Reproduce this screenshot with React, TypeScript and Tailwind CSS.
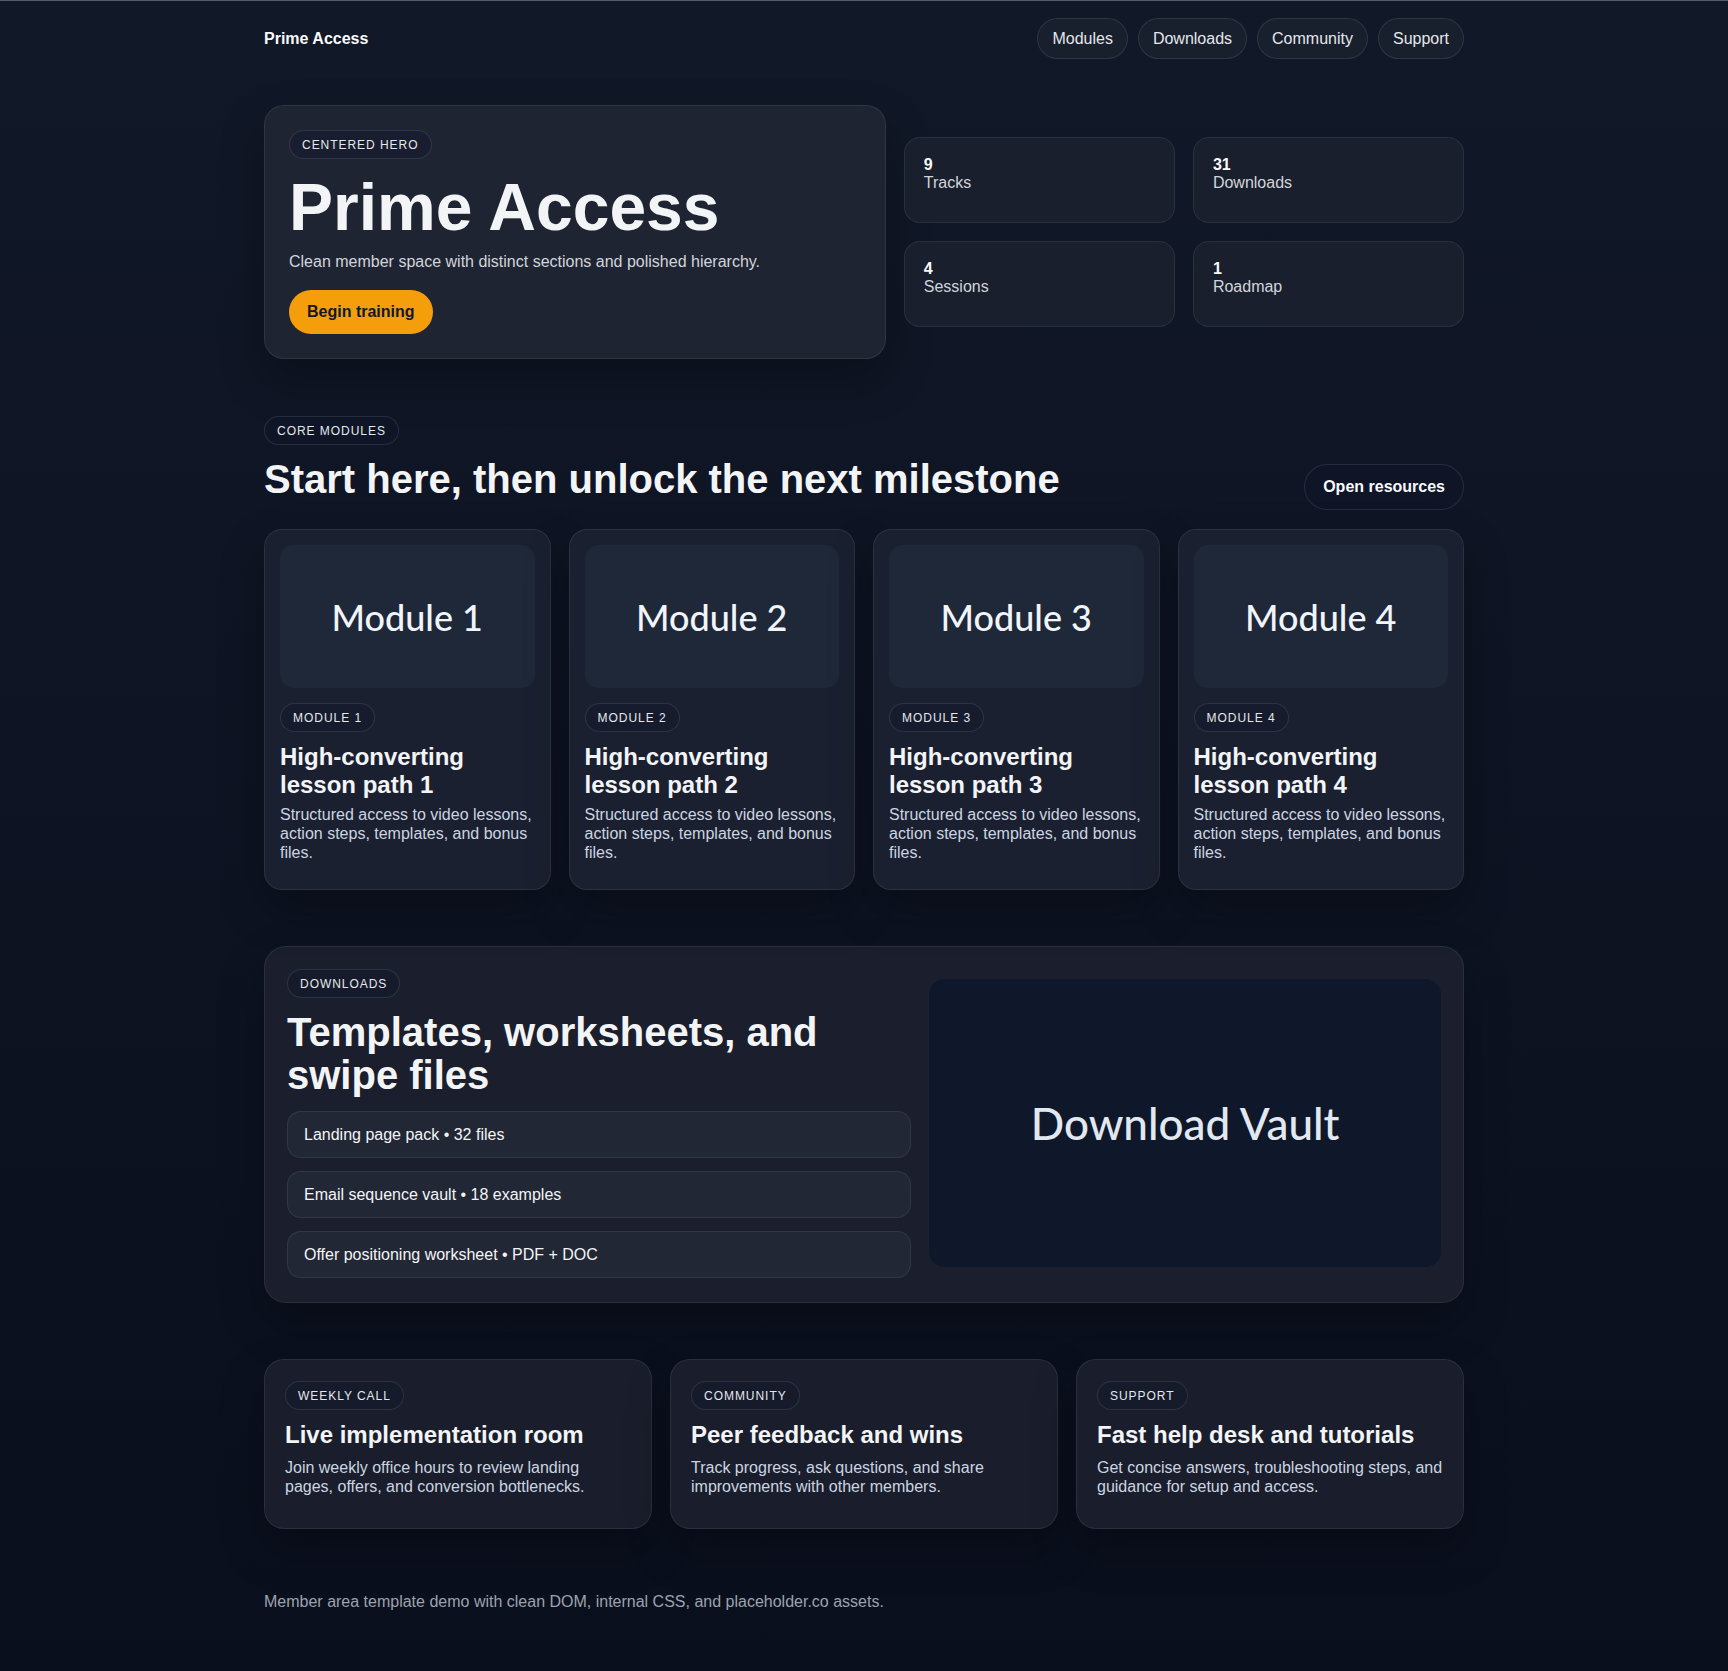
const tag =
  "inline-flex items-center rounded-full border border-white/10 bg-[#0f172a]/40 px-3 pt-[7px] pb-[5px] text-[12px] leading-[15px] tracking-[0.08em] uppercase text-[#e5e7eb]";

const navLinks = ["Modules", "Downloads", "Community", "Support"];

const stats = [
  { value: "9", label: "Tracks" },
  { value: "31", label: "Downloads" },
  { value: "4", label: "Sessions" },
  { value: "1", label: "Roadmap" },
];

const modules = [1, 2, 3, 4];

const files = [
  "Landing page pack • 32 files",
  "Email sequence vault • 18 examples",
  "Offer positioning worksheet • PDF + DOC",
];

const extras = [
  {
    tag: "Weekly call",
    title: "Live implementation room",
    text: "Join weekly office hours to review landing pages, offers, and conversion bottlenecks.",
  },
  {
    tag: "Community",
    title: "Peer feedback and wins",
    text: "Track progress, ask questions, and share improvements with other members.",
  },
  {
    tag: "Support",
    title: "Fast help desk and tutorials",
    text: "Get concise answers, troubleshooting steps, and guidance for setup and access.",
  },
];

export default function App() {
  return (
    <div className="min-h-screen border-t border-[#545b69] bg-linear-to-b from-[#111827] to-[#0a0f1d] font-['Liberation_Sans',Arial,sans-serif] text-[#f3f4f6]">
      <div className="mx-auto w-[1200px]">
        {/* Header */}
        <header className="flex items-center justify-between py-[17px]">
          <span className="text-[16px] font-bold text-[#f9fafb]">Prime Access</span>
          <nav className="flex items-center gap-[10px]">
            {navLinks.map((l) => (
              <a
                key={l}
                className="rounded-full border border-white/10 bg-white/[0.03] px-[14px] py-[10px] text-[16px] leading-[19px] text-[#e5e7eb]"
              >
                {l}
              </a>
            ))}
          </nav>
        </header>

        {/* Hero */}
        <section className="mt-[29px] grid grid-cols-[1.11fr_1fr] items-center gap-[18px]">
          <div className="flex flex-col items-start rounded-[20px] border border-white/[0.08] bg-[#1f2432] p-6 shadow-[0_20px_45px_rgba(0,0,0,0.28)]">
            <span className={tag}>Centered hero</span>
            <h1 className="mt-[15px] text-[66px] font-bold leading-none text-[#f3f4f6]">Prime Access</h1>
            <p className="mt-[10px] text-[16px] leading-6 text-[#d1d5db]">
              Clean member space with distinct sections and polished hierarchy.
            </p>
            <button className="mt-4 rounded-full bg-[#f59e0b] px-[18px] py-3 text-[16px] font-bold leading-5 text-[#111827]">
              Begin training
            </button>
          </div>
          <div className="grid grid-cols-2 gap-[18px]">
            {stats.map((s) => (
              <div
                key={s.label}
                className="h-[86px] rounded-2xl border border-white/[0.08] bg-[#1a1f2d] px-[19px] pt-[18px]"
              >
                <strong className="block text-[16px] font-bold leading-[18.4px] text-[#f9fafb]">{s.value}</strong>
                <span className="block text-[16px] leading-[18.4px] text-[#d1d5db]">{s.label}</span>
              </div>
            ))}
          </div>
        </section>

        {/* Core modules */}
        <section className="mt-[57px]">
          <div className="flex items-end justify-between">
            <div className="flex flex-col items-start">
              <span className={tag}>Core modules</span>
              <h2 className="mt-3 mb-[9px] text-[40px] font-bold leading-[1.1] text-[#f3f4f6]">
                Start here, then unlock the next milestone
              </h2>
            </div>
            <button className="rounded-full border border-white/10 bg-[#0f172a]/40 px-[18px] py-3 text-[16px] font-bold leading-5 text-[#f9fafb]">
              Open resources
            </button>
          </div>
          <div className="mt-[19px] grid grid-cols-4 gap-[18px]">
            {modules.map((n) => (
              <article
                key={n}
                className="flex flex-col items-start rounded-[18px] border border-white/[0.08] bg-[#1b2030] p-[15px] pb-[26px] shadow-[0_20px_45px_rgba(0,0,0,0.28)]"
              >
                <div className="flex aspect-video w-full items-center justify-center rounded-[14px] bg-[#1f2839] font-['Lato',sans-serif] text-[36px] font-medium text-[#f1f5f9]">
                  {`Module ${n}`}
                </div>
                <span className={`${tag} mt-[15px]`}>{`Module ${n}`}</span>
                <h3 className="mt-[11px] text-[24px] font-bold leading-[1.15] text-[#f3f4f6]">
                  {`High-converting lesson path ${n}`}
                </h3>
                <p className="mt-2 text-[16px] leading-[1.17] text-[#cbd5e1]">
                  Structured access to video lessons, action steps, templates, and bonus files.
                </p>
              </article>
            ))}
          </div>
        </section>

        {/* Downloads */}
        <section className="mt-[56px] grid grid-cols-[1.22fr_1fr] items-center gap-[18px] rounded-[22px] border border-white/[0.08] bg-[#1b1f2d] px-[22px] pt-[22px] pb-[24px] shadow-[0_20px_45px_rgba(0,0,0,0.28)]">
          <div className="flex flex-col items-start">
            <span className={tag}>Downloads</span>
            <h2 className="mt-[13px] text-[40px] font-bold leading-[1.08] text-[#f3f4f6]">
              Templates, worksheets, and swipe files
            </h2>
            <ul className="mt-[14px] flex w-full flex-col gap-[13px]">
              {files.map((f) => (
                <li
                  key={f}
                  className="rounded-[14px] border border-white/[0.08] bg-[#222735] px-4 py-[13px] text-[16px] leading-[19px] text-[#f3f4f6]"
                >
                  {f}
                </li>
              ))}
            </ul>
          </div>
          <div className="flex aspect-video w-full items-center justify-center rounded-2xl bg-[#0f172a] font-['Lato',sans-serif] text-[44px] font-medium text-[#e2e8f0]">
            Download Vault
          </div>
        </section>

        {/* Extras */}
        <section className="mt-[56px] grid grid-cols-3 gap-[18px]">
          {extras.map((e) => (
            <article
              key={e.title}
              className="flex flex-col items-start rounded-[20px] border border-white/[0.08] bg-[#1a1e2c] px-5 pt-[21px] pb-[31px] shadow-[0_20px_45px_rgba(0,0,0,0.28)]"
            >
              <span className={tag}>{e.tag}</span>
              <h3 className="mt-3 text-[24px] font-bold leading-[1.1] text-[#f3f4f6]">{e.title}</h3>
              <p className="mt-[11px] text-[16px] leading-[1.17] text-[#cbd5e1]">{e.text}</p>
            </article>
          ))}
        </section>

        <footer className="mt-[61px] pb-[57px] text-[16px] leading-6 text-[#9ca3af]">
          Member area template demo with clean DOM, internal CSS, and placeholder.co assets.
        </footer>
      </div>
    </div>
  );
}
